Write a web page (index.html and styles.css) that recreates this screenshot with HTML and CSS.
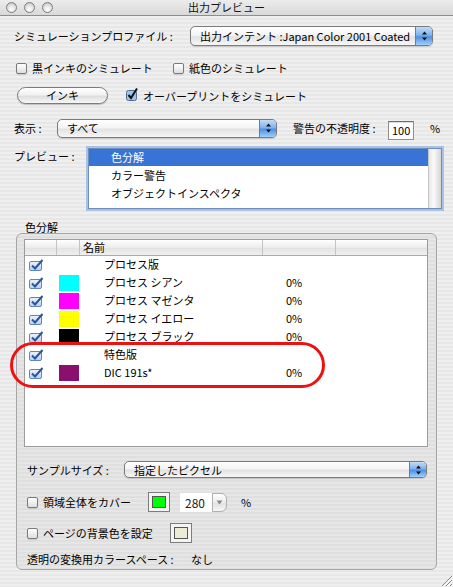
FILE: index.html
```html
<!DOCTYPE html>
<html lang="ja">
<head>
<meta charset="UTF-8">
<title>出力プレビュー</title>
<link rel="stylesheet" href="styles.css">
</head>
<body>

<div class="window">
    <div class="titlebar">
        <div class="lights"><span></span><span></span><span></span></div>
        <div class="title">出力プレビュー</div>
        <div></div>
    </div>

    <div class="content">
        <div class="row row-profile">
            <span class="label label-profile">シミュレーションプロファイル :</span>
            <div class="popup popup-profile">
                <span class="popup-text">出力インテント :Japan Color 2001 Coated</span>
                <span class="popup-arrow"><svg width="7" height="10" viewBox="0 0 7 10"><path d="M3.5 0.5 L6 3.5 L1 3.5 Z M3.5 9.5 L6 6.5 L1 6.5 Z" fill="#111"/></svg></span>
            </div>
        </div>

        <div class="row row-sim">
            <label class="check-item check-black"><span class="checkbox"></span>黒インキのシミュレート</label>
            <label class="check-item"><span class="checkbox"></span>紙色のシミュレート</label>
        </div>

        <div class="row row-ink">
            <div class="button">インキ</div>
            <label class="check-item check-overprint">
                <svg class="checkbox-on" width="13" height="13" viewBox="0 0 13 13"><rect x="0.5" y="2.5" width="10" height="10" rx="2" fill="#9cc4ef" stroke="#4a6f9c"/><path d="M2.5 7 L5 10 L11 0.5" fill="none" stroke="#111" stroke-width="2"/></svg>
                オーバープリントをシミュレート
            </label>
        </div>

        <div class="row row-view">
            <span class="label label-view">表示 :</span>
            <div class="popup popup-view">
                <span class="popup-text">すべて</span>
                <span class="popup-arrow"><svg width="7" height="10" viewBox="0 0 7 10"><path d="M3.5 0.5 L6 3.5 L1 3.5 Z M3.5 9.5 L6 6.5 L1 6.5 Z" fill="#111"/></svg></span>
            </div>
            <span class="label label-opacity">警告の不透明度 :</span>
            <div class="field field-opacity">100</div>
            <span class="percent">%</span>
        </div>

        <div class="row row-preview">
            <span class="label label-preview">プレビュー :</span>
            <div class="listbox">
                <div class="list-items">
                    <div class="list-item selected">色分解</div>
                    <div class="list-item">カラー警告</div>
                    <div class="list-item">オブジェクトインスペクタ</div>
                </div>
                <div class="list-scroll"></div>
            </div>
        </div>

        <div class="group-label">色分解</div>
        <div class="group">
            <div class="table">
                <div class="thead">
                    <div class="th"></div>
                    <div class="th"></div>
                    <div class="th">名前</div>
                    <div class="th"></div>
                    <div class="th th-last"></div>
                </div>
                <div class="tbody" id="plates"></div>
            </div>

            <div class="row row-sample">
                <span class="label label-sample">サンプルサイズ :</span>
                <div class="popup popup-sample">
                    <span class="popup-text">指定したピクセル</span>
                    <span class="popup-arrow"><svg width="7" height="10" viewBox="0 0 7 10"><path d="M3.5 0.5 L6 3.5 L1 3.5 Z M3.5 9.5 L6 6.5 L1 6.5 Z" fill="#111"/></svg></span>
                </div>
            </div>

            <div class="row row-cover">
                <label class="check-item check-cover"><span class="checkbox"></span>領域全体をカバー</label>
                <div class="well"><span class="well-color green"></span></div>
                <div class="combo">
                    <span class="combo-field">280</span>
                    <span class="combo-btn"><svg width="7" height="5" viewBox="0 0 7 5"><path d="M0.5 0.5 L6.5 0.5 L3.5 4.5 Z" fill="#8a8a8a"/></svg></span>
                </div>
                <span class="percent percent-cover">%</span>
            </div>

            <div class="row row-pagebg">
                <label class="check-item check-pagebg"><span class="checkbox"></span>ページの背景色を設定</label>
                <div class="well"><span class="well-color paper"></span></div>
            </div>

            <div class="row row-space">
                <span class="label label-space">透明の変換用カラースペース :</span>
                <span>なし</span>
            </div>
        </div>
    </div>

    <div class="highlight"></div>

    <svg class="grip" width="13" height="13" viewBox="0 0 13 13">
        <path d="M12 2 L2 12 M12 6 L6 12 M12 10 L10 12" stroke="#8c8c8c" stroke-width="1"/>
        <path d="M13 3 L3 13 M13 7 L7 13 M13 11 L11 13" stroke="#fff" stroke-width="1"/>
    </svg>
</div>

<script>
var plates = [
    { name: "プロセス版", color: "", pct: "" },
    { name: "プロセス シアン", color: "#00ffff", pct: "0%" },
    { name: "プロセス マゼンタ", color: "#ff00ff", pct: "0%" },
    { name: "プロセス イエロー", color: "#ffff00", pct: "0%" },
    { name: "プロセス ブラック", color: "#000000", pct: "0%" },
    { name: "特色版", color: "", pct: "" },
    { name: "DIC 191s*", color: "#8a0f6e", pct: "0%" }
];

var checkIcon = '<svg width="15" height="12" viewBox="0 0 15 12"><defs><linearGradient id="cg" x1="0" y1="0" x2="0" y2="1"><stop offset="0" stop-color="#eef4fb"/><stop offset="1" stop-color="#b8cfeb"/></linearGradient></defs><rect x="0.5" y="2.5" width="12" height="9" rx="1.5" fill="url(#cg)" stroke="#5f87bd"/><path d="M3 6.5 L6 9.5 L13.5 1" fill="none" stroke="#24579f" stroke-width="2"/></svg>';

var body = document.getElementById("plates");
plates.forEach(function (p) {
    var row = document.createElement("div");
    row.className = "tr";
    var swatch = p.color ? '<span class="swatch" style="background:' + p.color + '"></span>' : '';
    row.innerHTML =
        '<div class="td td-check">' + checkIcon + '</div>' +
        '<div class="td td-swatch">' + swatch + '</div>' +
        '<div class="td td-name">' + p.name + '</div>' +
        '<div class="td td-pct">' + p.pct + '</div>' +
        '<div class="td"></div>';
    body.appendChild(row);
});
</script>

</body>
</html>
```

FILE: styles.css
```css
body {
    margin: 0;
    font-family: "Noto Sans CJK JP", "DejaVu Sans", sans-serif;
    font-size: 11px;
    color: #000;
}

.window {
    position: relative;
    width: 453px;
    height: 587px;
    overflow: hidden;
    background: repeating-linear-gradient(to bottom, #efefef 0, #efefef 2px, #e7e7e7 2px, #e7e7e7 4px);
}

/* title bar */
.titlebar {
    display: grid;
    grid-template-columns: 1fr auto 1fr;
    align-items: center;
    height: 15px;
    border-bottom: 1px solid #8d8d8d;
    background: linear-gradient(#ececec, #d9d9d9);
}

.lights {
    display: flex;
    gap: 7px;
    padding-left: 6px;
}

.lights span {
    width: 9px;
    height: 9px;
    border-radius: 50%;
    border: 1px solid #7e7e7e;
    background: radial-gradient(circle at 50% 70%, #ffffff 0, #e2e2e2 50%, #b5b5b5 100%);
}

.title {
    font-size: 11px;
    line-height: 15px;
    color: #111;
}

/* content */
.content {
    padding-left: 14px;
}

.row {
    display: flex;
    align-items: center;
    white-space: nowrap;
}

.label {
    flex: none;
}

.row-profile {
    margin-top: 10px;
    height: 20px;
}

.label-profile {
    width: 176px;
}

.popup {
    display: flex;
    align-items: center;
    box-sizing: border-box;
    border: 1px solid #7b7b7b;
    border-radius: 5px;
    background: linear-gradient(#ffffff 0, #f4f4f4 45%, #e3e3e3 55%, #f6f6f6 100%);
    box-shadow: 0 1px 1px rgba(0, 0, 0, 0.15);
    overflow: hidden;
}

.popup-text {
    flex: 1;
    padding-left: 9px;
}

.popup-arrow {
    display: flex;
    align-items: center;
    justify-content: center;
    align-self: stretch;
    width: 16px;
    border-left: 1px solid #5580b8;
    background: linear-gradient(#c3dcf7 0, #7fb2ee 45%, #4f8fe3 55%, #9fd0fb 100%);
}

.popup-profile {
    width: 243px;
    height: 20px;
}

.row-sim {
    margin-top: 16px;
    height: 12px;
    padding-left: 2px;
}

.check-item {
    display: flex;
    align-items: center;
}

.checkbox {
    flex: none;
    width: 11px;
    height: 11px;
    box-sizing: border-box;
    margin-right: 5px;
    border: 1px solid #7a7a7a;
    border-radius: 2px;
    background: linear-gradient(#ffffff, #dedede);
    box-shadow: 0 1px 1px rgba(0, 0, 0, 0.12);
}

.check-black {
    width: 157px;
}

.row-ink {
    margin-top: 13px;
    height: 17px;
    padding-left: 3px;
}

.button {
    width: 91px;
    height: 17px;
    box-sizing: border-box;
    border: 1px solid #7b7b7b;
    border-radius: 9px;
    background: linear-gradient(#ffffff 0, #f1f1f1 45%, #dedede 55%, #f7f7f7 100%);
    box-shadow: 0 1px 1px rgba(0, 0, 0, 0.2);
    text-align: center;
    line-height: 15px;
}

.check-overprint {
    margin-left: 18px;
}

.checkbox-on {
    margin-right: 4px;
    margin-top: -2px;
}

.row-view {
    margin-top: 14px;
    height: 20px;
}

.label-view {
    width: 43px;
}

.popup-view {
    width: 220px;
    height: 19px;
}

.label-opacity {
    width: 95px;
    margin-left: 16px;
}

.field {
    box-sizing: border-box;
    border: 1px solid #8f8f8f;
    border-top-color: #6d6d6d;
    background: #fff;
    box-shadow: inset 0 1px 1px rgba(0, 0, 0, 0.15);
}

.field-opacity {
    width: 26px;
    height: 19px;
    margin-top: 5px;
    line-height: 17px;
    padding-left: 3px;
}

.percent {
    margin-left: 16px;
}

.row-preview {
    margin-top: 10px;
    align-items: flex-start;
}

.label-preview {
    width: 74px;
    line-height: 14px;
    padding-top: 1px;
}

.listbox {
    display: flex;
    width: 354px;
    height: 61px;
    box-sizing: border-box;
    border: 1px solid #6f8fb8;
    background: #fff;
    box-shadow: 0 0 0 2px #a7c2e3;
}

.list-items {
    flex: 1;
}

.list-item {
    height: 18px;
    line-height: 18px;
    padding-left: 22px;
}

.list-item.selected {
    height: 17px;
    line-height: 17px;
    background: #3873d6;
    color: #fff;
}

.list-scroll {
    width: 12px;
    background: linear-gradient(to right, #e6e6e6, #fafafa 40%, #d4d4d4);
    border-left: 1px solid #c8c8c8;
}

/* group */
.group-label {
    margin-top: 12px;
    margin-left: 11px;
    line-height: 12px;
}

.group {
    width: 421px;
    height: 337px;
    box-sizing: border-box;
    margin-left: 2px;
    padding: 5px 0 0 7px;
    border: 1px solid #a6a6a6;
    border-radius: 6px;
    background: repeating-linear-gradient(to bottom, #e6e6e6 0, #e6e6e6 2px, #dfdfdf 2px, #dfdfdf 4px);
}

.table {
    width: 404px;
    height: 208px;
    box-sizing: border-box;
    border: 1px solid #9c9c9c;
    background: #fff;
}

.thead,
.tr {
    display: grid;
    grid-template-columns: 32px 23px 183px 73px 1fr;
}

.thead {
    height: 15px;
    border-bottom: 1px solid #a9a9a9;
    background: linear-gradient(#ffffff, #ececec 50%, #e2e2e2 51%, #f0f0f0);
}

.th {
    border-right: 1px solid #c4c4c4;
    line-height: 15px;
    padding-left: 3px;
}

.th-last {
    border-right: none;
}

.tr {
    height: 18px;
}

.td {
    display: flex;
    align-items: center;
}

.td-check {
    padding-left: 4px;
}

.td-swatch {
    align-items: flex-start;
    padding: 1px 0 0 2px;
}

.swatch {
    width: 20px;
    height: 16px;
}

.td-name {
    padding-left: 24px;
    padding-bottom: 2px;
}

.td-pct {
    padding-left: 23px;
    padding-bottom: 2px;
}

.row-sample {
    margin-top: 14px;
    height: 17px;
    padding-left: 3px;
}

.label-sample {
    width: 97px;
}

.popup-sample {
    width: 303px;
    height: 17px;
}

.row-cover {
    margin-top: 14px;
    height: 20px;
    padding-left: 3px;
}

.check-cover {
    width: 121px;
}

.well {
    display: flex;
    align-items: center;
    justify-content: center;
    width: 22px;
    height: 20px;
    box-sizing: border-box;
    border: 1px solid #7c7c7c;
    background: #f4f4f4;
}

.well-color {
    width: 14px;
    height: 12px;
    box-sizing: border-box;
    border: 1px solid #555;
}

.well-color.green {
    background: #00ff00;
}

.well-color.paper {
    background: #ecebd6;
}

.combo {
    display: flex;
    margin-left: 10px;
    height: 19px;
}

.combo-field {
    width: 32px;
    box-sizing: border-box;
    background: #fff;
    padding-left: 5px;
    line-height: 19px;
    font-size: 12px;
    color: #222;
}

.combo-btn {
    display: flex;
    align-items: center;
    justify-content: center;
    width: 15px;
    box-sizing: border-box;
    border: 1px solid #b1b1b1;
    border-radius: 0 6px 6px 0;
    background: linear-gradient(#ffffff, #ececec 50%, #e0e0e0 51%, #f5f5f5);
}

.percent-cover {
    margin-left: 14px;
}

.row-pagebg {
    margin-top: 11px;
    height: 20px;
    padding-left: 3px;
}

.check-pagebg {
    width: 143px;
}

.row-space {
    margin-top: 10px;
    height: 12px;
    padding-left: 3px;
}

.label-space {
    width: 164px;
}

/* red annotation drawn over the table */
.highlight {
    position: absolute;
    left: 10px;
    top: 342px;
    width: 315px;
    height: 46px;
    box-sizing: border-box;
    border: 3px solid #ee1111;
    border-radius: 23px;
}

.grip {
    position: absolute;
    right: 0;
    bottom: 0;
}
```
